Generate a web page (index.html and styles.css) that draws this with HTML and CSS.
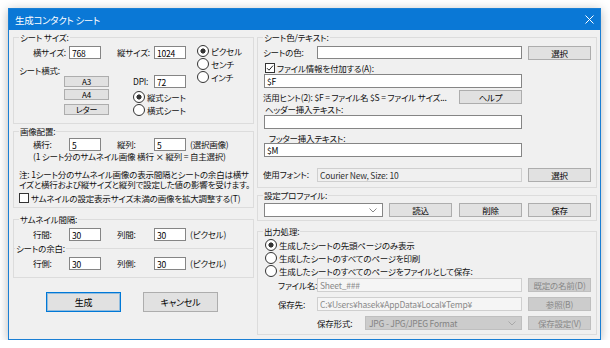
FILE: index.html
```html
<!DOCTYPE html>
<html lang="ja">
<head>
    <meta charset="UTF-8">
    <meta name="viewport" content="width=device-width, initial-scale=1.0">
    <title>生成コンタクト シート</title>
    <link rel="stylesheet" href="styles.css">
</head>
<body>
    <div class="window">
        <div class="titlebar">
            <span class="title">生成コンタクト シート</span>
            <svg class="close" width="9" height="9" viewBox="0 0 9 9"><path d="M0.5 0.5L8.5 8.5M8.5 0.5L0.5 8.5" stroke="#fff" stroke-width="1"/></svg>
        </div>

        <div class="client">
            <div class="col-left">
                <fieldset class="group g-size">
                    <legend>シート サイズ:</legend>
                    <div class="size-cols">
                        <div class="size-a">
                            <div class="row"><label class="lbl-r">横サイズ:</label><input class="edit w32" value="768" readonly></div>
                            <div class="sub-label">シート横式:</div>
                            <button class="btn small">A3</button>
                            <button class="btn small b2">A4</button>
                            <button class="btn small b3">レター</button>
                        </div>
                        <div class="size-b">
                            <div class="row"><label class="lbl-37">縦サイズ:</label><input class="edit w32" value="1024" readonly></div>
                            <div class="row dpi"><label class="lbl-37 ind">DPI:</label><input class="edit w32" value="72" readonly></div>
                            <div class="radio checked ind first">縦式シート</div>
                            <div class="radio ind">横式シート</div>
                        </div>
                        <div class="size-c">
                            <div class="radio checked">ピクセル</div>
                            <div class="radio">センチ</div>
                            <div class="radio">インチ</div>
                        </div>
                    </div>
                </fieldset>

                <fieldset class="group g-layout">
                    <legend>画像配置:</legend>
                    <div class="row grid-row first">
                        <label class="lbl-55">横行:</label><input class="edit w32" value="5" readonly>
                        <label class="lbl-37 gap16">縦列:</label><input class="edit w32" value="5" readonly>
                        <span class="unit">(選択画像)</span>
                    </div>
                    <div class="layout-sub">(1 シート分のサムネイル画像 横行 × 縦列 = 自主選択)</div>
                    <div class="note">注: 1シート分のサムネイル画像の表示間隔とシートの余白は横サ<br>イズと横行および縦サイズと縦列で設定した値の影響を受けます。</div>
                    <div class="check-row"><span class="check"></span>サムネイルの設定表示サイズ未満の画像を拡大調整する(T)</div>
                </fieldset>

                <fieldset class="group g-gap">
                    <legend>サムネイル間隔:</legend>
                    <div class="row grid-row first">
                        <label class="lbl-55">行間:</label><input class="edit w32" value="30" readonly>
                        <label class="lbl-37 gap16">列間:</label><input class="edit w32" value="30" readonly>
                        <span class="unit">(ピクセル)</span>
                    </div>
                    <fieldset class="subgroup">
                        <legend>シートの余白:</legend>
                        <div class="row grid-row first">
                            <label class="lbl-55">行側:</label><input class="edit w32" value="30" readonly>
                            <label class="lbl-37 gap16">列側:</label><input class="edit w32" value="30" readonly>
                            <span class="unit">(ピクセル)</span>
                        </div>
                    </fieldset>
                </fieldset>

                <div class="actions">
                    <button class="btn big default">生成</button>
                    <button class="btn big">キャンセル</button>
                </div>
            </div>

            <div class="col-right">
                <fieldset class="group r-text">
                    <legend>シート色/テキスト:</legend>
                    <div class="row first">
                        <label class="lbl-59">シートの色:</label><input class="edit w205" value="" readonly>
                        <button class="btn side">選択</button>
                    </div>
                    <div class="check-row r-check"><span class="check on"><svg width="8" height="8" viewBox="0 0 8 8"><path d="M1 4.2L3 6.2L7 1.6" fill="none" stroke="#222" stroke-width="1"/></svg></span>ファイル情報を付加する(A):</div>
                    <input class="edit wide" value="$F" readonly>
                    <div class="row hint">
                        <span class="hint-text">活用ヒント(2): $F = ファイル名 $S = ファイル サイズ...</span>
                        <button class="btn side">ヘルプ</button>
                    </div>
                    <div class="field-label">ヘッダー挿入テキスト:</div>
                    <input class="edit wide hdr" value="" readonly>
                    <div class="field-label ftr">フッター挿入テキスト:</div>
                    <input class="edit wide" value="$M" readonly>
                    <div class="row font-row">
                        <label class="lbl-59">使用フォント:</label><input class="edit ro w205" value="Courier New, Size: 10" readonly>
                        <button class="btn side">選択</button>
                    </div>
                </fieldset>

                <fieldset class="group r-profile">
                    <legend>設定プロファイル:</legend>
                    <div class="row first">
                        <div class="combo w119"><span></span><svg width="8" height="5" viewBox="0 0 8 5"><path d="M0.5 0.5L4 4L7.5 0.5" fill="none" stroke="#888" stroke-width="1"/></svg></div>
                        <button class="btn side">読込</button>
                        <button class="btn side m7">削除</button>
                        <button class="btn side">保存</button>
                    </div>
                </fieldset>

                <fieldset class="group r-output">
                    <legend>出力処理:</legend>
                    <div class="radio checked r-radio first">生成したシートの先頭ページのみ表示</div>
                    <div class="radio r-radio">生成したシートのすべてのページを印刷</div>
                    <div class="radio r-radio">生成したシートのすべてのページをファイルとして保存:</div>
                    <div class="row out-row first-out">
                        <label class="lbl-59 ind20">ファイル名:</label><input class="edit dis w205" value="Sheet_###" readonly>
                        <button class="btn side" disabled>既定の名前(D)</button>
                    </div>
                    <div class="row out-row">
                        <label class="lbl-59 ind20">保存先:</label><input class="edit dis w205" value="C:¥Users¥hasek¥AppData¥Local¥Temp¥" readonly>
                        <button class="btn side" disabled>参照(B)</button>
                    </div>
                    <div class="row out-row">
                        <label class="lbl-107">保存形式:</label>
                        <div class="combo dis w157"><span>JPG - JPG/JPEG Format</span><svg width="8" height="5" viewBox="0 0 8 5"><path d="M0.5 0.5L4 4L7.5 0.5" fill="none" stroke="#a8a8a8" stroke-width="1"/></svg></div>
                        <button class="btn side" disabled>保存設定(V)</button>
                    </div>
                </fieldset>
            </div>
        </div>
    </div>
</body>
</html>
```

FILE: styles.css
```css
* { box-sizing: border-box; }
body {
    margin: 0;
    background: #fff;
    font-family: "Noto Sans CJK JP", "Noto Sans", sans-serif;
    font-size: 8.5px;
    letter-spacing: -0.2px;
    font-feature-settings: "palt";
    color: #111;
}
.window {
    margin: 8px 0 0 8px;
    width: 593px; height: 332px;
    border: 1px solid #1a7fd4;
    background: #f0f0f0;
    box-shadow: 0 2px 10px rgba(0,0,0,0.28);
    display: flex; flex-direction: column;
}
.titlebar {
    height: 21px; flex: none;
    background: #0a78d6;
    color: #fff;
    display: flex; align-items: center; justify-content: space-between;
    padding: 0 6px 0 6px;
}
.title { font-size: 9.5px; letter-spacing: -0.3px; }
.client { flex: 1; display: flex; gap: 3px; padding: 1px 3px 0 4px; }
.col-left { width: 241px; display: flex; flex-direction: column; }
.col-right { width: 340px; display: flex; flex-direction: column; }

/* group boxes */
fieldset.group { margin: 0; padding: 0; border: 1px solid #dcdcdc; min-width: 0; }
fieldset legend { margin-left: 5px; padding: 0 1px; height: 12px; line-height: 12px; }
.g-size { height: 93px; }
.g-layout { height: 83px; margin-top: 1px !important; }
.g-gap { height: 65px; margin-top: 5px !important; }
.r-text { height: 157px; }
.r-profile { height: 32px; margin-top: 1px !important; }
.r-output { height: 110px; margin-top: 4px !important; }
fieldset.subgroup {
    margin: 1px 0 0 0; padding: 0; min-width: 0;
    border: none; border-top: 1px solid #dcdcdc;
}
fieldset.subgroup legend { margin-left: 1px; }

/* controls */
.row { display: flex; align-items: flex-start; }
.row label { line-height: 13px; white-space: nowrap; }
input.edit {
    font: inherit; letter-spacing: inherit; color: #000;
    height: 13px; padding: 0 2px; margin: 0;
    border: 1px solid #858585; background: #fff;
    outline: none;
}
input.w32 { width: 32px; }
input.w205 { width: 205px; height: 13px; }
input.wide { display: block; width: 258px; height: 14px; margin-left: 6px; }
input.ro { background: #f0f0f0; border-color: #cfcfcf; color: #333; }
input.dis { background: #f5f5f5; border-color: #cfcfcf; color: #8a8a8a; height: 14px; }
.btn {
    font: inherit; letter-spacing: inherit; color: #000;
    background: #e1e1e1; border: 1px solid #adadad;
    padding: 0; margin: 0;
    line-height: 1;
}
.btn:disabled { background: #cccccc; border-color: #bfbfbf; color: #888; }
.btn.small { width: 45px; height: 11px; margin-left: 50px; font-size: 8px; }
.btn.b2 { margin-top: 2px; }
.btn.b3 { margin-top: 4px; }
.btn.side { width: 63px; height: 14px; margin-left: 6px; }
.btn.side.m7 { margin-left: 7px; }
.btn.big { width: 75px; height: 20px; font-size: 9px; }
.btn.default { border-color: #0078d7; box-shadow: inset 0 0 0 1px rgba(0,120,215,0.35); }

.radio { display: flex; align-items: center; height: 13px; white-space: nowrap; }
.radio::before {
    content: ""; flex: none;
    width: 10px; height: 10px; margin-right: 2px;
    border: 1px solid #333; border-radius: 50%;
    background: #fff;
}
.radio.checked::before { background: radial-gradient(circle, #333 0 2.3px, #fff 2.8px); }
.check-row { display: flex; align-items: center; height: 12px; white-space: nowrap; }
.check {
    flex: none; width: 10px; height: 10px; margin-right: 2px;
    border: 1px solid #333; background: #fff;
    display: flex; align-items: center; justify-content: center;
}
.combo {
    height: 14px; display: flex; align-items: center; justify-content: space-between;
    border: 1px solid #858585; background: #fff;
    padding: 0 5px 0 3px; margin-left: 6px;
}
.combo.w119 { width: 119px; }
.combo.w157 { width: 157px; margin-left: 0; }
.combo.dis { background: #cccccc; border-color: #bfbfbf; color: #838383; }

/* シート サイズ */
.size-cols { display: flex; }
.size-a { width: 96px; display: flex; flex-direction: column; align-items: flex-start; }
.size-a .row { margin-top: 3px; }
.lbl-r { width: 52px; margin-right: 3px; text-align: right; }
.sub-label { margin-top: 5px; padding-left: 5px; height: 12px; line-height: 12px; }
.size-b { width: 70px; margin-left: 7px; }
.size-b .row { margin-top: 3px; }
.size-b .row.dpi { margin-top: 16px; }
.lbl-37 { width: 37px; }
.ind { padding-left: 16px; }
.size-b .radio.first { margin-top: 2px; }
.size-c { margin-left: 10px; padding-top: 1px; }

/* 画像配置 / 間隔 */
.grid-row.first { margin-top: 2px; }
.lbl-55 { width: 55px; padding-left: 19px; }
.gap16 { margin-left: 16px; }
.unit { margin-left: 4px; line-height: 13px; white-space: nowrap; }
.g-gap .grid-row.first, .subgroup .grid-row.first { margin-top: 3px; }
.g-layout .grid-row.first { margin-top: 1px; }
.layout-sub { padding-left: 19px; line-height: 10px; white-space: nowrap; }
.note { margin-top: 8px; padding-left: 5px; line-height: 10px; white-space: nowrap; }
.g-layout .check-row { margin-top: 3px; padding-left: 5px; }
.actions { display: flex; gap: 22px; padding-left: 33px; margin-top: 14px; }

/* 右側 */
.r-text .row.first, .r-profile .row.first { margin-top: 3px; }
.r-profile .row.first { margin-top: 2px; }
.lbl-59 { width: 59px; padding-left: 5px; }
.r-check { margin-top: 2px; padding-left: 7px; }
.hint { margin-top: 2px; align-items: center; }
.hint-text { width: 195px; padding-left: 5px; white-space: nowrap; overflow: hidden; }
.field-label { padding-left: 7px; height: 10px; line-height: 10px; white-space: nowrap; }
input.hdr { margin-top: 1px; }
.field-label.ftr { margin-top: 4px; padding-left: 11px; }
.font-row { margin-top: 11px; }
.font-row input.ro { height: 14px; }
.r-radio { padding-left: 7px; }
.r-radio.first { margin-top: 1px; }
.out-row { margin-top: 5px; }
.out-row.first-out { margin-top: 1px; }
.out-row label { line-height: 14px; }
.ind20 { padding-left: 20px; }
.lbl-107 { width: 107px; padding-left: 59px; }
```
